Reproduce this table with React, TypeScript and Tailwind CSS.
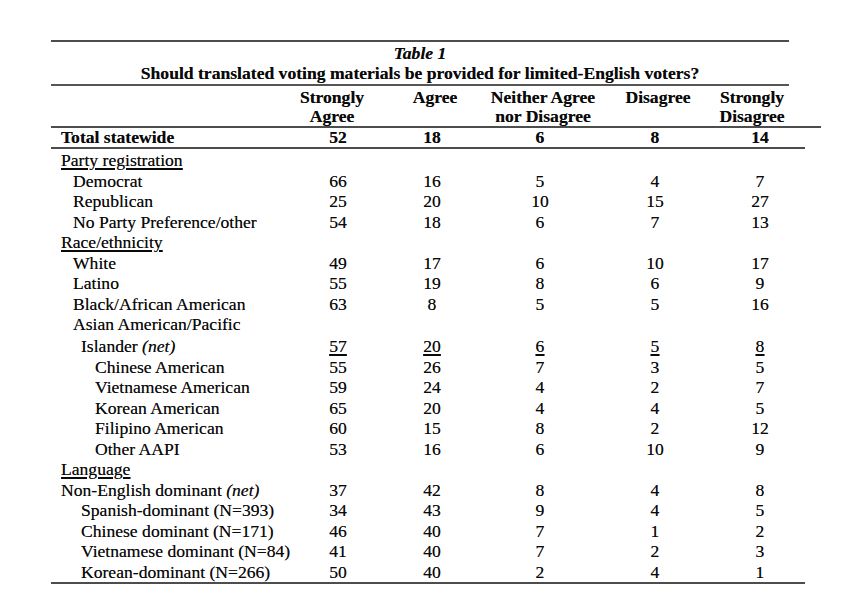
import React from "react";

type Row = {
  label: React.ReactNode;
  indent: string;
  values?: string[];
  section?: boolean;
  underlineValues?: boolean;
  extra?: string;
};

const rows: Row[] = [
  { label: "Party registration", indent: "pl-[10px]", section: true },
  { label: "Democrat", indent: "pl-[22px]", values: ["66", "16", "5", "4", "7"] },
  { label: "Republican", indent: "pl-[22px]", values: ["25", "20", "10", "15", "27"] },
  { label: "No Party Preference/other", indent: "pl-[22px]", values: ["54", "18", "6", "7", "13"] },
  { label: "Race/ethnicity", indent: "pl-[10px]", section: true },
  { label: "White", indent: "pl-[22px]", values: ["49", "17", "6", "10", "17"] },
  { label: "Latino", indent: "pl-[22px]", values: ["55", "19", "8", "6", "9"] },
  { label: "Black/African American", indent: "pl-[22px]", values: ["63", "8", "5", "5", "16"] },
  { label: "Asian American/Pacific", indent: "pl-[22px]" },
  {
    label: (
      <>
        Islander <i>(net)</i>
      </>
    ),
    indent: "pl-[30px]",
    values: ["57", "20", "6", "5", "8"],
    underlineValues: true,
    extra: "pt-[1px] pb-[1px]",
  },
  { label: "Chinese American", indent: "pl-[44px]", values: ["55", "26", "7", "3", "5"] },
  { label: "Vietnamese American", indent: "pl-[44px]", values: ["59", "24", "4", "2", "7"] },
  { label: "Korean American", indent: "pl-[44px]", values: ["65", "20", "4", "4", "5"] },
  { label: "Filipino American", indent: "pl-[44px]", values: ["60", "15", "8", "2", "12"] },
  { label: "Other AAPI", indent: "pl-[44px]", values: ["53", "16", "6", "10", "9"] },
  { label: "Language", indent: "pl-[10px]", section: true },
  {
    label: (
      <>
        Non-English dominant <i>(net)</i>
      </>
    ),
    indent: "pl-[10px]",
    values: ["37", "42", "8", "4", "8"],
  },
  { label: "Spanish-dominant (N=393)", indent: "pl-[30px]", values: ["34", "43", "9", "4", "5"] },
  { label: "Chinese dominant (N=171)", indent: "pl-[30px]", values: ["46", "40", "7", "1", "2"] },
  { label: "Vietnamese dominant (N=84)", indent: "pl-[30px]", values: ["41", "40", "7", "2", "3"] },
  { label: "Korean-dominant (N=266)", indent: "pl-[30px]", values: ["50", "40", "2", "4", "1"] },
];

const GRID = "grid grid-cols-[240px_94px_94px_122px_108px_102px]";

export default function App() {
  return (
    <div
      className="w-[850px] h-[607px] bg-white text-[#0a0a0a] text-[17.6px] overflow-hidden [text-shadow:0_0_0.5px_rgba(0,0,0,0.6)]"
      style={{ fontFamily: '"Liberation Serif", "Times New Roman", serif' }}
    >
      <div className="pl-[51px] pt-[40px]">
        <div className="h-[2px] w-[738px] bg-[#4d4d4d]" />
        <div className="w-[738px] text-center font-bold italic leading-[20.4px] pt-[1px]">Table 1</div>
        <div className="w-[738px] text-center font-bold leading-[20.6px] whitespace-nowrap">
          Should translated voting materials be provided for limited-English voters?
        </div>
        <div className="h-[1.5px] w-[738px] bg-[#555]" />
        <div className={`${GRID} pt-[2.4px] font-bold leading-[19.2px] text-center`}>
          <div />
          <div className="pr-[12px]">
            Strongly
            <br />
            Agree
          </div>
          <div className="pl-[6px]">Agree</div>
          <div className="pl-[6px]">
            Neither Agree
            <br />
            nor Disagree
          </div>
          <div className="pl-[6px]">Disagree</div>
          <div className="pr-[16px]">
            Strongly
            <br />
            Disagree
          </div>
        </div>
        <div className="h-[2px] w-[770px] bg-[#4d4d4d]" />
        <div className={`${GRID} font-bold leading-[19px]`}>
          <div className="pl-[10px]">Total statewide</div>
          <div className="text-center">52</div>
          <div className="text-center">18</div>
          <div className="text-center">6</div>
          <div className="text-center">8</div>
          <div className="text-center">14</div>
        </div>
        <div className="h-[2px] w-[754px] bg-[#4d4d4d]" />
        <div className="pt-[1.2px] leading-[20.45px]">
          {rows.map((r, i) => (
            <div key={i} className={`${GRID} ${r.extra ?? ""}`}>
              <div className={`${r.indent} whitespace-nowrap`}>
                {r.section ? (
                  <span className="underline underline-offset-[2px] decoration-[1.5px]">{r.label}</span>
                ) : (
                  r.label
                )}
              </div>
              {(r.values ?? ["", "", "", "", ""]).map((v, j) => (
                <div key={j} className="text-center">
                  {r.underlineValues ? (
                    <span className="underline underline-offset-[2px] decoration-[1.5px]">{v}</span>
                  ) : (
                    v
                  )}
                </div>
              ))}
            </div>
          ))}
        </div>
        <div className="h-[2px] w-[754px] bg-[#4d4d4d]" />
      </div>
    </div>
  );
}
